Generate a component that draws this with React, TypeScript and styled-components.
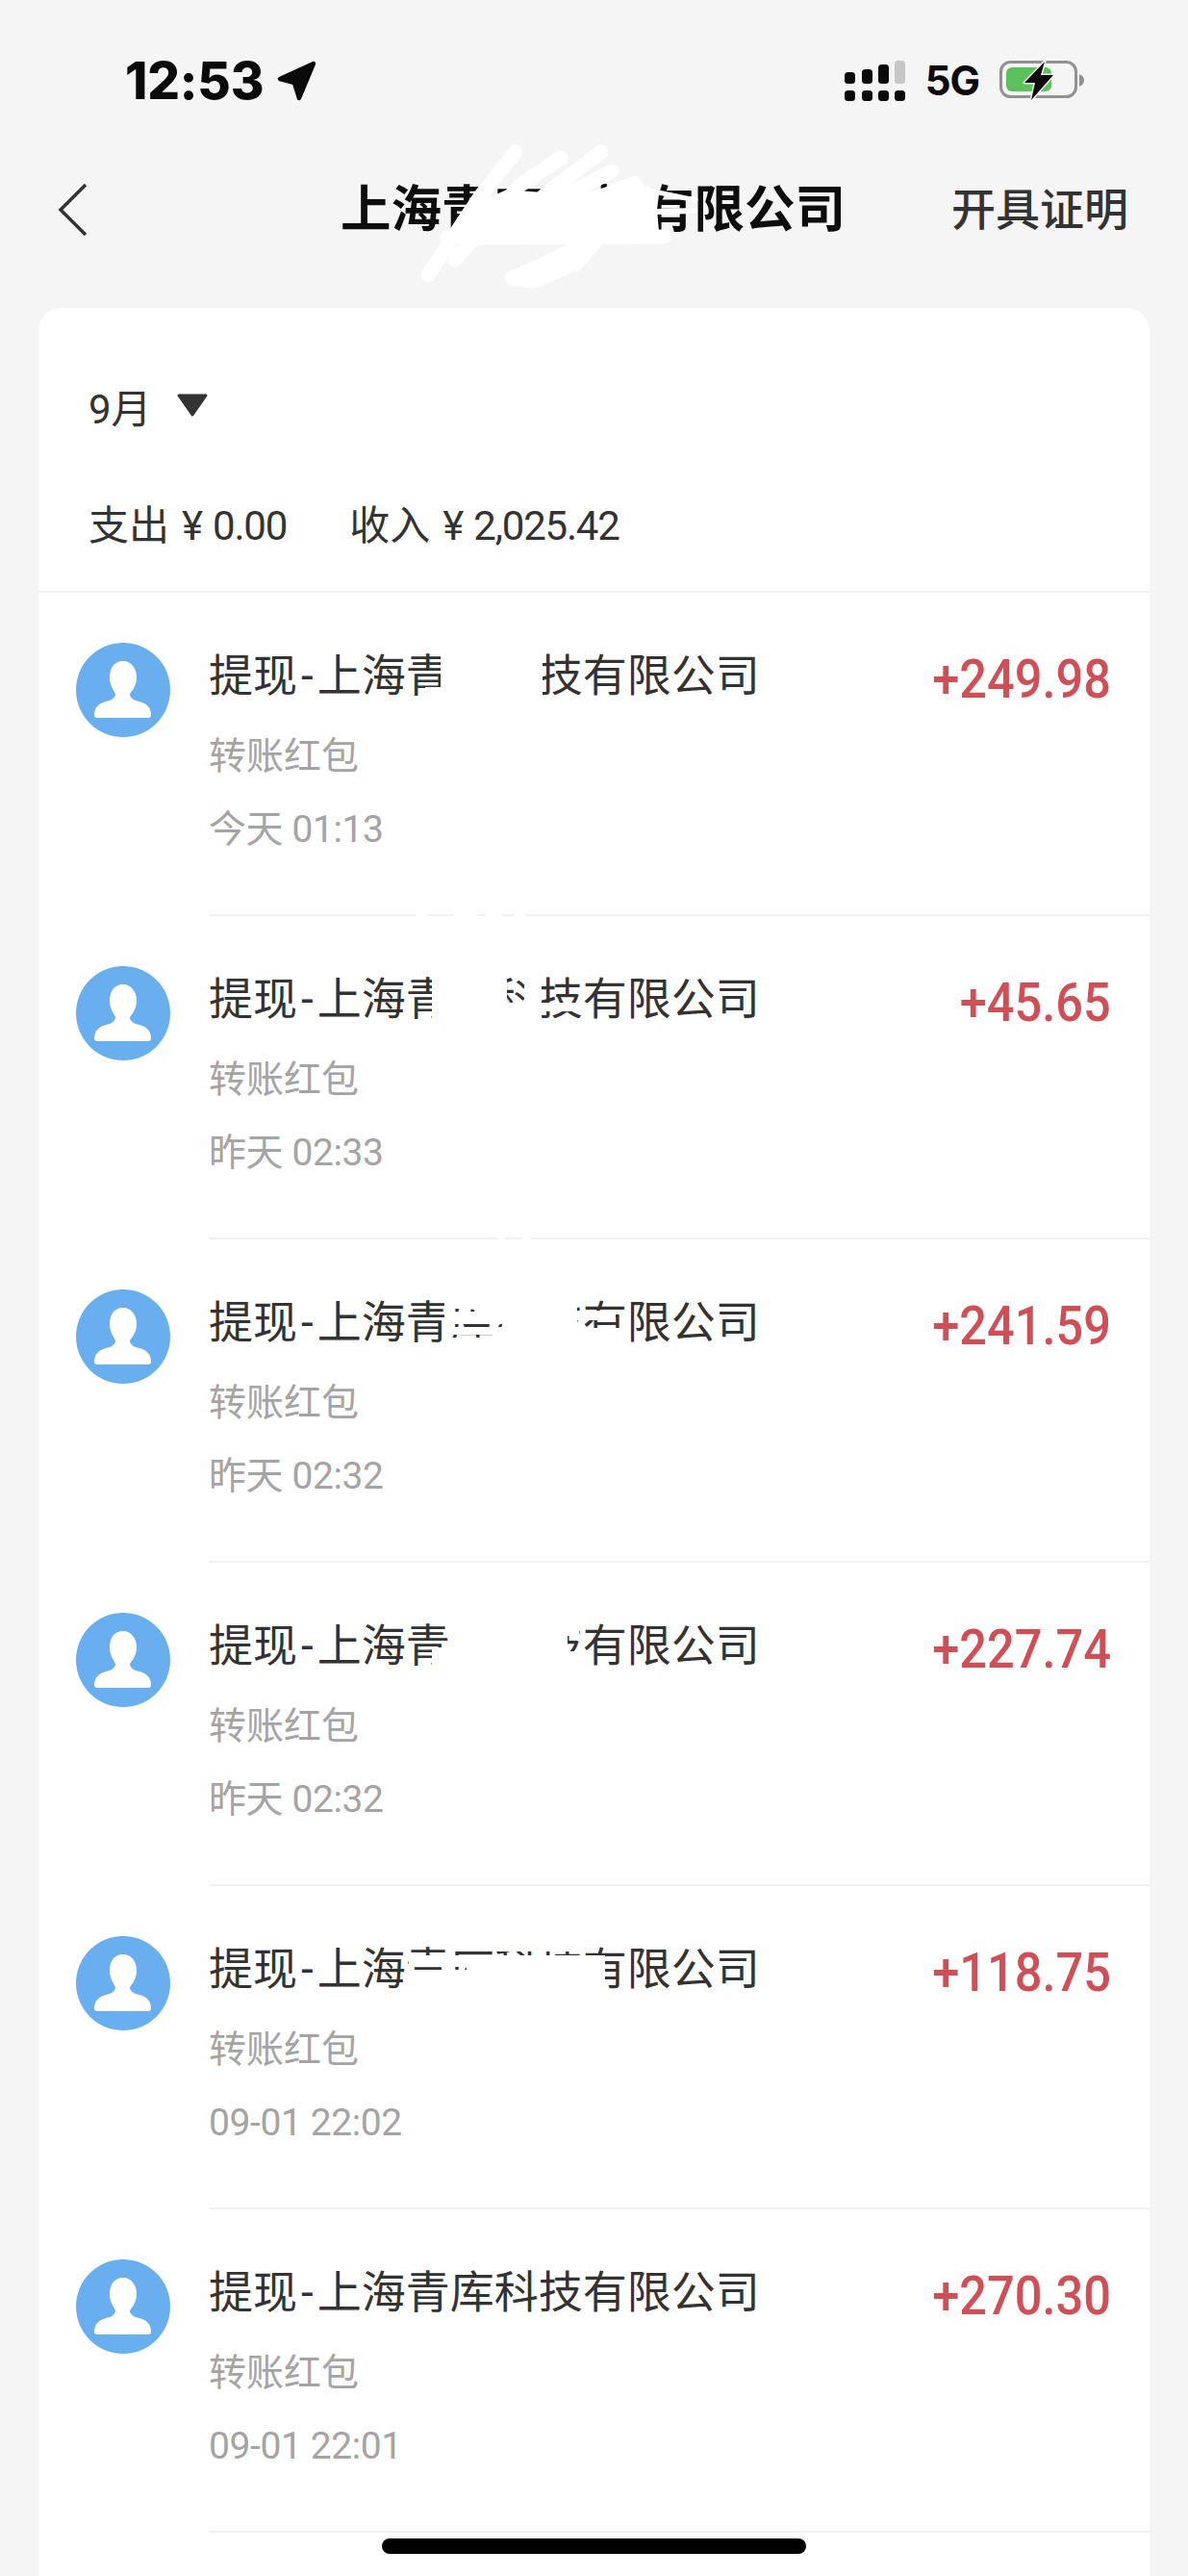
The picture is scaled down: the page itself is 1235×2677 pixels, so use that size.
import React from "react";
import styled, { createGlobalStyle } from "styled-components";

const Global = createGlobalStyle`
  html, body { margin: 0; padding: 0; background: #f5f5f5; }
  * { box-sizing: border-box; }
`;

const CJK = `Roboto, "Noto Sans CJK SC", sans-serif`;

const Page = styled.div`
  position: relative;
  width: 1235px;
  height: 2677px;
  overflow: hidden;
  display: flex;
  flex-direction: column;
  background: #f5f5f5;
  font-family: ${CJK};
`;

const StatusBar = styled.div`
  display: flex;
  align-items: center;
  justify-content: space-between;
  height: 46px;
  margin-top: 61px;
  padding: 0 107px 0 130px;
`;
const TimeGroup = styled.div`
  display: flex;
  align-items: center;
  gap: 13px;
`;
const Clock = styled.span`
  font-family: Inter, sans-serif;
  font-weight: 800;
  font-size: 53px;
  line-height: 46px;
  color: #0a0a0a;
  letter-spacing: -0.2px;
`;
const StatusIcons = styled.div`
  display: flex;
  align-items: center;
  gap: 21px;
`;
const Network = styled.span`
  font-family: Inter, sans-serif;
  font-weight: 700;
  font-size: 42px;
  line-height: 46px;
  color: #0a0a0a;
  letter-spacing: -1px;
`;

const Header = styled.div`
  position: relative;
  display: grid;
  grid-template-columns: 1fr auto 1fr;
  align-items: center;
  height: 60px;
  margin-top: 81px;
  padding: 0 62px 0 60px;
`;
const Title = styled.div`
  font-size: 52.5px;
  line-height: 60px;
  font-weight: 700;
  color: #0d0d0d;
  white-space: nowrap;
`;
const Action = styled.div`
  justify-self: end;
  font-size: 46px;
  line-height: 60px;
  font-weight: 500;
  color: #333;
  white-space: nowrap;
`;
const Scribble = styled.svg`
  position: absolute;
  left: 340px;
  top: -48px;
`;

const Card = styled.div`
  flex: 1;
  margin: 72px 40px 0;
  background: #fff;
  border-radius: 24px 24px 0 0;
`;
const Summary = styled.div`
  display: flex;
  flex-direction: column;
  height: 296px;
  padding: 76px 52px 0;
  border-bottom: 2px solid #f1f1f1;
  color: #333;
`;
const Month = styled.div`
  display: flex;
  align-items: center;
  gap: 25px;
  height: 50px;
  font-size: 42px;
`;
const Totals = styled.div`
  display: flex;
  align-items: center;
  gap: 65px;
  height: 50px;
  margin-top: 71px;
  font-size: 42px;
`;
const Total = styled.span`
  white-space: nowrap;
`;
const Yen = styled.span`
  margin: 0 10px 0 13px;
`;
const Num = styled.span`
  letter-spacing: -1.2px;
`;

const Row = styled.div`
  display: flex;
  align-items: flex-start;
  padding-left: 39px;
`;
const Avatar = styled.svg`
  flex: none;
  margin: 52px 40px 0 0;
`;
const RowBody = styled.div`
  position: relative;
  flex: 1;
  height: 336px;
  display: flex;
  justify-content: space-between;
  padding: 56px 40px 0 0;
  border-bottom: 2px solid #f1f1f1;
`;
const Texts = styled.div`
  display: flex;
  flex-direction: column;
`;
const RowTitle = styled.div`
  font-size: 46px;
  line-height: 60px;
  color: #333;
  white-space: nowrap;
`;
const Dash = styled.span`
  margin: 0 4px;
`;
const Sub = styled.div`
  margin-top: 29px;
  font-size: 39px;
  line-height: 50px;
  color: #a4a4a4;
`;
const When = styled.div`
  margin-top: 26px;
  font-size: 39px;
  line-height: 50px;
  color: #a4a4a4;
  white-space: nowrap;
  letter-spacing: -0.4px;
`;
const Amount = styled.div`
  font-size: 55px;
  line-height: 60px;
  font-weight: 500;
  color: #cf4f57;
  margin-top: 4px;
  transform: scaleX(0.92);
  transform-origin: right center;
`;
const Patch = styled.div<{ $x: number; $y: number; $w: number; $h: number }>`
  position: absolute;
  left: ${(p) => p.$x}px;
  top: ${(p) => p.$y}px;
  width: ${(p) => p.$w}px;
  height: ${(p) => p.$h}px;
  background: #fff;
`;
const HomeBar = styled.div`
  position: absolute;
  left: 397px;
  top: 2638px;
  width: 441px;
  height: 16px;
  border-radius: 8px;
  background: #000;
`;

type R = [number, number, number, number];
const rows: { amount: string; when: string; patches: R[] }[] = [
  {
    amount: "+249.98",
    when: "今天 01:13",
    patches: [
      [241, 58, 106, 60],
      [225, 98, 20, 10],
      [215, 332, 13, 5],
      [255, 332, 24, 5],
      [288, 332, 17, 5],
      [318, 332, 11, 5],
    ],
  },
  {
    amount: "+45.65",
    when: "昨天 02:33",
    patches: [
      [232, 58, 78, 60],
      [310, 90, 18, 28],
      [328, 58, 18, 60],
      [346, 90, 50, 9],
      [300, 332, 8, 5],
      [326, 332, 9, 5],
    ],
  },
  {
    amount: "+241.59",
    when: "昨天 02:32",
    patches: [
      [245, 58, 60, 14],
      [245, 75, 60, 13],
      [245, 91, 60, 8],
      [245, 102, 60, 14],
      [305, 58, 50, 60],
      [355, 58, 28, 60],
      [383, 74, 40, 10],
      [383, 92, 45, 24],
    ],
  },
  {
    amount: "+227.74",
    when: "昨天 02:32",
    patches: [
      [232, 88, 23, 28],
      [255, 58, 118, 60],
      [373, 58, 12, 18],
      [373, 92, 14, 24],
    ],
  },
  {
    amount: "+118.75",
    when: "09-01 22:02",
    patches: [
      [208, 72, 60, 12],
      [208, 87, 60, 30],
      [268, 72, 120, 46],
      [268, 60, 120, 8],
      [388, 72, 24, 46],
    ],
  },
  { amount: "+270.30", when: "09-01 22:01", patches: [] },
];

function LocationIcon() {
  return (
    <svg width="42" height="42" viewBox="0 0 42 42">
      <path d="M39 3 L4 19 L19 23 L24 39 Z" fill="#0a0a0a" stroke="#0a0a0a" strokeWidth="4.5" strokeLinejoin="round" />
    </svg>
  );
}

function SignalIcon() {
  const dots = [0, 18, 35, 52];
  const tops = [12, 9, 4, 0];
  return (
    <svg width="63" height="42" viewBox="0 0 63 42">
      {dots.map((x, i) => (
        <g key={x}>
          <rect x={x} y={tops[i]} width="11" height={24 - tops[i]} rx="3.5" fill={i === 3 ? "#c6c6c6" : "#0a0a0a"} />
          <rect x={x} y="31" width="11" height="11" rx="3.5" fill="#0a0a0a" />
        </g>
      ))}
    </svg>
  );
}

function BatteryIcon() {
  return (
    <svg width="89" height="42" viewBox="0 0 89 42">
      <rect x="1.5" y="1.5" width="78" height="36" rx="10" fill="none" stroke="#919191" strokeWidth="3" />
      <rect x="7" y="7" width="47" height="25" rx="6" fill="#5cc05c" />
      <path d="M83 14 Q88 16 88 20 Q88 25 83 27 Z" fill="#919191" />
      <path d="M47 1 L26 23 L37 23 L33 41 L56 15 L43 15 Z" fill="#0a0a0a" stroke="#f5f5f5" strokeWidth="3" strokeLinejoin="round" paintOrder="stroke" />
    </svg>
  );
}

function BackIcon() {
  return (
    <svg width="32" height="56" viewBox="0 0 32 56">
      <path d="M29 2 L3 28 L29 54" fill="none" stroke="#333" strokeWidth="3.5" />
    </svg>
  );
}

function PersonAvatar() {
  return (
    <Avatar width="98" height="98" viewBox="0 0 98 98">
      <circle cx="49" cy="49" r="49" fill="#69aeee" />
      <path
        d="M49 19 C39 19 35 27 35 36 C35 44 39 49 41 53 C41 57 37 60 31 61 C23 63 19 68 19 75 Q19 78 22 78 L75 78 Q78 78 78 75 C78 68 74 63 66 61 C60 60 56 57 56 53 C59 49 63 44 63 36 C63 27 58 19 49 19 Z"
        fill="#fff"
      />
    </Avatar>
  );
}

function TriangleIcon() {
  return (
    <svg width="34" height="24" viewBox="0 0 34 24">
      <path d="M3 2 L31 2 L17 22 Z" fill="#333" stroke="#333" strokeWidth="3" strokeLinejoin="round" />
    </svg>
  );
}

function TitleScribble() {
  return (
    <Scribble width="400" height="170" viewBox="0 0 400 170">
      <g fill="none" stroke="#fff" strokeWidth="15" strokeLinecap="round" strokeLinejoin="round">
        <path d="M196 18 L160 63 L105 146" />
        <path d="M243 24 L200 53 L133 130" />
        <path d="M285 18 L233 57 L183 100" />
        <path d="M296 38 L235 70" />
        <path d="M320 50 L260 75" />
        <path d="M125 107 L350 106" />
        <path d="M278 108 L235 130 L192 149 L215 152 L260 133 L278 112" />
      </g>
      <path d="M153 72 L187 57 L260 63 L320 46 L345 62 L343 78 L345 100 L353 107 L233 107 L123 107 L143 93 Z" fill="#fff" />
      <g fill="none" stroke="#fff" strokeLinecap="round">
        <path d="M325 56 L383 68" strokeWidth="5" />
        <path d="M343 80 L382 79" strokeWidth="6" />
      </g>
    </Scribble>
  );
}

export default function App() {
  return (
    <Page>
      <Global />
      <StatusBar>
        <TimeGroup>
          <Clock>12:53</Clock>
          <LocationIcon />
        </TimeGroup>
        <StatusIcons>
          <SignalIcon />
          <Network>5G</Network>
          <BatteryIcon />
        </StatusIcons>
      </StatusBar>
      <Header>
        <BackIcon />
        <Title>上海青库科技有限公司</Title>
        <Action>开具证明</Action>
        <TitleScribble />
      </Header>
      <Card>
        <Summary>
          <Month>
            9月
            <TriangleIcon />
          </Month>
          <Totals>
            <Total>
              支出<Yen>¥</Yen><Num>0.00</Num>
            </Total>
            <Total>
              收入<Yen>¥</Yen><Num>2,025.42</Num>
            </Total>
          </Totals>
        </Summary>
        {rows.map((r) => (
          <Row key={r.amount}>
            <PersonAvatar />
            <RowBody>
              <Texts>
                <RowTitle>
                  提现<Dash>-</Dash>上海青库科技有限公司
                </RowTitle>
                <Sub>转账红包</Sub>
                <When>{r.when}</When>
              </Texts>
              <Amount>{r.amount}</Amount>
              {r.patches.map(([x, y, w, h]) => (
                <Patch key={`${x}-${y}`} $x={x} $y={y} $w={w} $h={h} />
              ))}
            </RowBody>
          </Row>
        ))}
      </Card>
      <HomeBar />
    </Page>
  );
}
